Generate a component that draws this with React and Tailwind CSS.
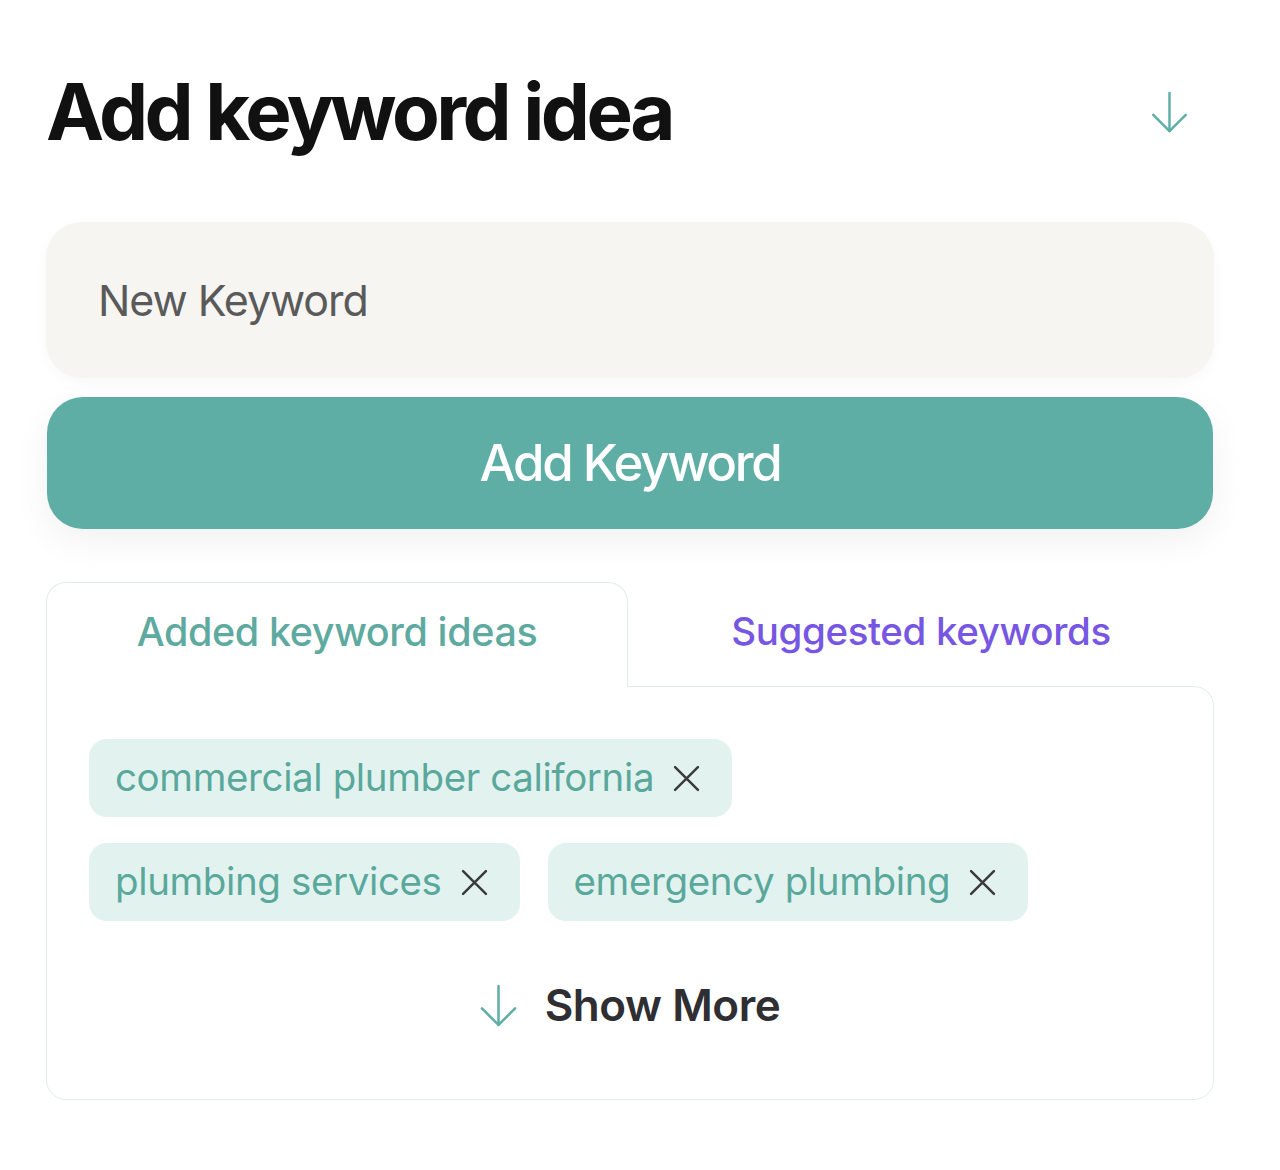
import React from "react";

function DownArrow({ className }) {
  return (
    <svg className={className} viewBox="0 0 38 44" fill="none" stroke="currentColor" strokeWidth="2.6" strokeLinecap="round" strokeLinejoin="round">
      <path d="M19 2v40" />
      <path d="M2 25l17 17 17-17" />
    </svg>
  );
}

function Cross() {
  return (
    <svg className="w-[27px] h-[27px] text-[#3a3a3a]" viewBox="0 0 26 26" fill="none" stroke="currentColor" strokeWidth="2.4" strokeLinecap="round">
      <path d="M2 2l22 22M24 2L2 24" />
    </svg>
  );
}

function Chip({ label }) {
  return (
    <div className="flex items-center gap-[19px] h-[78px] pl-[26px] pr-[32px] rounded-[18px] bg-[#e2f3ef]">
      <span className="text-[38.5px] text-[#5aa89c] tracking-[-0.01em]">{label}</span>
      <Cross />
    </div>
  );
}

export default function App() {
  return (
    <div className="min-h-screen bg-white font-['Inter',sans-serif] pl-[46px] pr-[66px] pt-[73px]">
      {/* Header */}
      <div className="flex items-center justify-between">
        <h1 className="text-[78px] leading-none font-bold tracking-[-0.045em] text-[#111]">Add keyword idea</h1>
        <DownArrow className="w-[37px] h-[42px] mr-[26px] text-[#5fafa6]" />
      </div>

      {/* Input + button */}
      <div className="mt-[71px] h-[156px] rounded-[36px] bg-[#f6f5f2] flex items-center pl-[52px] shadow-[0_4px_14px_rgba(0,0,0,0.03)]">
        <span className="text-[43px] text-[#5a5a5a] tracking-[-0.025em]">New Keyword</span>
      </div>
      <button className="mt-[19px] mx-px w-[1166px] h-[132px] rounded-[36px] bg-[#5eaea6] text-white text-[51px] font-medium tracking-[-0.045em] shadow-[0_12px_36px_rgba(0,0,0,0.06)]">
        Add Keyword
      </button>

      {/* Tabs */}
      <div className="mt-[53px]">
        <div className="grid grid-cols-[582px_1fr]">
          <div className="relative z-10 -mb-px h-[105px] pb-[4px] bg-white border border-b-0 border-[#e1ecea] rounded-t-[20px] flex items-center justify-center">
            <span className="text-[39.5px] font-medium text-[#5eaaa0] tracking-[-0.01em]">Added keyword ideas</span>
          </div>
          <div className="flex items-center justify-center pb-[4px]">
            <span className="text-[38.5px] font-medium text-[#7656e2] tracking-[-0.01em]">Suggested keywords</span>
          </div>
        </div>
        <div className="border border-[#e1ecea] rounded-[20px] rounded-tl-none pt-[52px] pl-[42px] pr-[42px] pb-[70px]">
          <div className="flex flex-wrap gap-x-[28px] gap-y-[26px]">
            <Chip label="commercial plumber california" />
            <Chip label="plumbing services" />
            <Chip label="emergency plumbing" />
          </div>
          <div className="mt-[60px] flex items-center justify-center gap-[28px] h-[48px]">
            <DownArrow className="w-[37px] h-[43px] text-[#5fafa6]" />
            <span className="text-[44px] font-semibold text-[#2f2f33] tracking-[-0.01em]">Show More</span>
          </div>
        </div>
      </div>
    </div>
  );
}
